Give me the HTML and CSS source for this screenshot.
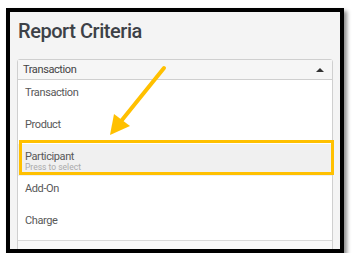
FILE: index.html
```html
<!DOCTYPE html>
<html>
<head>
<meta charset="utf-8">
<link rel="stylesheet" href="styles.css">
</head>
<body>
<div class="frame">
  <h1 class="title">Report Criteria</h1>
  <div class="select">
    <div class="select-head">
      <span>Transaction</span>
      <span class="caret"></span>
    </div>
    <ul class="options">
      <li class="opt">Transaction</li>
      <li class="opt">Product</li>
      <li class="opt opt-active">Participant<span class="hint">Press to select</span></li>
      <li class="opt">Add-On</li>
      <li class="opt">Charge</li>
    </ul>
    <div class="select-tail"></div>
  </div>
  <div class="highlight"></div>
  <svg class="arrow" width="80" height="80" viewBox="0 0 80 80">
    <line x1="58" y1="3" x2="16" y2="55" stroke="#ffc000" stroke-width="4" stroke-linecap="round"/>
    <polygon points="4,70 8,49 24,61" fill="#ffc000"/>
  </svg>
</div>
</body>
</html>
```
FILE: styles.css
```css
* { box-sizing: border-box; }
html, body { margin: 0; padding: 0; background: #fff; }
body { font-family: Roboto, "Liberation Sans", sans-serif; }
.frame {
  position: relative;
  margin: 8px 0 0 6px;
  width: 338px;
  height: 245px;
  border: 4px solid #000;
  background: #f4f4f4;
  box-shadow: 3px 3px 4px rgba(0,0,0,0.45);
  padding: 5px 7px 0 7px;
  overflow: hidden;
}
.title {
  margin: 0 0 0 1px;
  font-size: 20px;
  font-weight: 500;
  line-height: 28px;
  color: #3d4147;
  height: 42px;
  letter-spacing: -0.45px;
}
.select {
  border: 1px solid #cfcfcf;
  border-radius: 3px 3px 0 0;
  background: #fff;
}
.select-head {
  height: 20px;
  display: flex;
  align-items: center;
  justify-content: space-between;
  padding: 0 8px 0 5px;
  background: #f6f6f6;
  border-bottom: 1px solid #cfcfcf;
  font-size: 11px;
  letter-spacing: -0.4px;
  color: #444;
}
.caret {
  width: 0; height: 0;
  border-left: 4px solid transparent;
  border-right: 4px solid transparent;
  border-bottom: 4px solid #333;
}
.options { list-style: none; margin: 0; padding: 0; border-bottom: 1px solid #d8d8d8; }
.opt {
  height: 32px;
  padding: 6px 7px 0 7px;
  font-size: 11px;
  letter-spacing: -0.4px;
  line-height: 13px;
  color: #585858;
}
.opt-active {
  background: #f0f0f0;
  display: flex;
  flex-direction: column;
  padding-top: 7px;
  line-height: 12px;
}
.hint { font-size: 8.5px; line-height: 8px; color: #aaa; letter-spacing: 0; }
.select-tail { height: 20px; background: #f8f8f8; }
.highlight {
  position: absolute;
  left: 9px; top: 128px;
  width: 315px; height: 35px;
  border: 3px solid #ffc000;
}
.arrow { position: absolute; left: 96px; top: 53px; }
```
